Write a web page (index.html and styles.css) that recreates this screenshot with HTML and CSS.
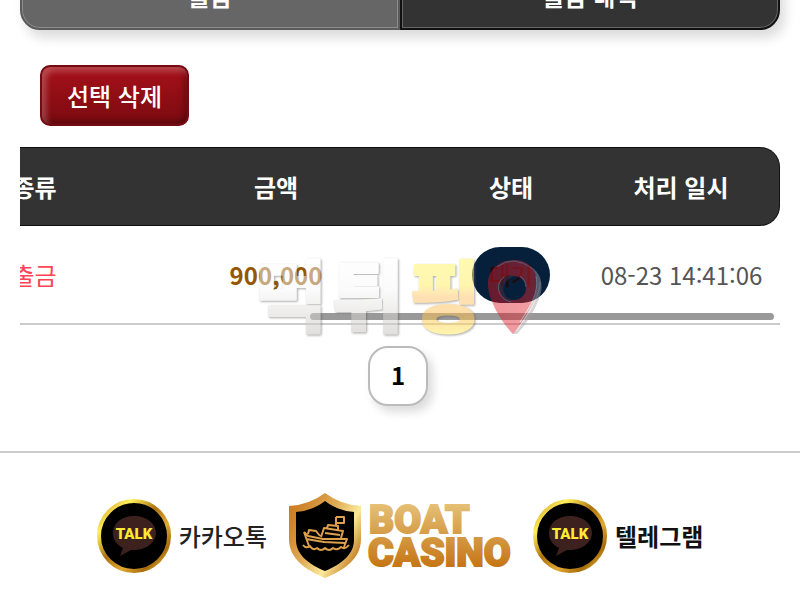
FILE: index.html
```html
<!DOCTYPE html>
<html lang="ko">
<head>
    <meta charset="UTF-8">
    <meta name="viewport" content="width=device-width, initial-scale=1.0">
    <title>출금 내역</title>
    <link rel="stylesheet" href="styles.css">
</head>
<body>
    <main class="container">
        <div class="tabs">
            <button type="button" class="tab">출금</button>
            <button type="button" class="tab active">출금 내역</button>
        </div>

        <button type="button" class="delete-btn">선택 삭제</button>

        <div class="history">
            <div class="table-scroll">
                <table>
                    <colgroup>
                        <col class="col-type">
                        <col class="col-amount">
                        <col class="col-status">
                        <col class="col-date">
                    </colgroup>
                    <thead>
                        <tr>
                            <th>종류</th>
                            <th>금액</th>
                            <th>상태</th>
                            <th>처리 일시</th>
                        </tr>
                    </thead>
                    <tbody>
                        <tr>
                            <td class="type">출금</td>
                            <td class="amount">900,000</td>
                            <td><span class="badge">대기</span></td>
                            <td>08-23 14:41:06</td>
                        </tr>
                    </tbody>
                </table>
            </div>
            <div class="scroll-thumb"></div>

            <svg class="watermark" width="300" height="90" viewBox="0 0 300 90">
                <defs>
                    <linearGradient id="silver" gradientUnits="userSpaceOnUse" x1="0" y1="10" x2="0" y2="86">
                        <stop offset="0" stop-color="#ffffff"/>
                        <stop offset=".4" stop-color="#f8f8f8"/>
                        <stop offset="1" stop-color="#c4c0bd"/>
                    </linearGradient>
                    <linearGradient id="yellow" gradientUnits="userSpaceOnUse" x1="0" y1="10" x2="0" y2="86">
                        <stop offset="0" stop-color="#fff765"/>
                        <stop offset=".35" stop-color="#ffee60"/>
                        <stop offset=".5" stop-color="#ffc36a"/>
                        <stop offset=".75" stop-color="#ffc050"/>
                        <stop offset="1" stop-color="#ffee5c"/>
                    </linearGradient>
                    <linearGradient id="red" x1="0" y1="0" x2="1" y2="0">
                        <stop offset="0" stop-color="#dc1420"/>
                        <stop offset="1" stop-color="#e02c38"/>
                    </linearGradient>
                </defs>
                <g class="mark-text">
                    <text x="2 79" y="77" fill="url(#silver)" stroke="url(#silver)">먹튀</text>
                    <text class="mark-accent" x="156" y="77" fill="url(#yellow)" stroke="url(#yellow)">핑</text>
                </g>
                <g class="pin">
                    <path d="M274 16C286 21 290 31 288 43C284 59 272 77 264 85H259C271 70 280 54 282 38Z" fill="#a9a0a3"/>
                    <path fill-rule="evenodd" d="M261 11C277 11 285 23 284 38C281 55 267 78 260 85C250 75 236 53 235 37C234 22 245 11 261 11ZM261 27A12 12 0 1 0 261 51A12 12 0 1 0 261 27Z" fill="url(#red)"/>
                    <path d="M257 53C244 49 243 31 256 26L262 27C248 31 247 45 257 51Z" fill="#56313f"/>
                    <path d="M258 53C245 50 241 35 251 28M244 18Q260 5 280 20M267 27Q273 31 273 38" fill="none" stroke="#c5a5b0" stroke-width="1"/>
                    <path d="M287 33C287 48 273 69 263 82M283 27C287 45 274 62 267 73" fill="none" stroke="#e8e0e2" stroke-width="1"/>
                </g>
            </svg>
        </div>

        <nav class="pagination">
            <button type="button" class="page">1</button>
        </nav>
    </main>

    <footer class="footer">
        <a href="#" class="contact">
            <svg width="74" height="74" viewBox="0 0 74 74">
                <defs>
                    <linearGradient id="ring" x1="0" y1="0" x2="1" y2="1">
                        <stop offset="0" stop-color="#c68a18"/>
                        <stop offset=".22" stop-color="#fff05b"/>
                        <stop offset=".45" stop-color="#ad7210"/>
                        <stop offset=".65" stop-color="#e1a931"/>
                        <stop offset=".82" stop-color="#a86c0b"/>
                        <stop offset="1" stop-color="#ffe34c"/>
                    </linearGradient>
                </defs>
                <circle cx="37" cy="37" r="35" fill="#000" stroke="url(#ring)" stroke-width="4"/>
                <path d="M37 17C25 17 16 24 16 34C16 41 20 46 26 49L23 57L34 51C48 52 59 44 59 34C59 24 49 17 37 17Z" fill="#3d211f"/>
                <text x="37" y="40" class="talk">TALK</text>
            </svg>
            <span>카카오톡</span>
        </a>

        <svg class="logo" width="224" height="86" viewBox="0 0 224 86">
            <defs>
                <linearGradient id="shield" x1="0" y1="0" x2="1" y2=".7">
                    <stop offset="0" stop-color="#c8791c"/>
                    <stop offset=".2" stop-color="#cf852e"/>
                    <stop offset=".5" stop-color="#e0ac55"/>
                    <stop offset=".75" stop-color="#fbea9c"/>
                    <stop offset="1" stop-color="#c47b20"/>
                </linearGradient>
                <linearGradient id="gold" gradientUnits="userSpaceOnUse" x1="0" y1="12" x2="0" y2="74">
                    <stop offset="0" stop-color="#e4bf74"/>
                    <stop offset="1" stop-color="#c57514"/>
                </linearGradient>
            </defs>
            <path d="M37 0Q53 12 73 13V46C73 66 56 77 37 85C18 77 1 66 1 46V13Q21 12 37 0Z" fill="url(#shield)"/>
            <path d="M37 8Q50 18 66 19V47C66 61 54 71 37 78C20 71 8 61 8 47V19Q24 18 37 8Z" fill="#000"/>
            <!-- boat -->
            <g fill="none" stroke="#dda04b" stroke-width="2" stroke-linejoin="round">
                <path d="M16 39L20 43L35 46H59L56 54M16 39L21 53M18 46L36 49L57 50M20 41L21 37L28 38L32 43M33 44L36 35L55 38L53 45M37 40L52 42M39 35L40 32L50 33V37M48 33V24"/>
                <path d="M48 24H56V30H48"/>
                <path d="M15 52Q18 56 22 53Q25 58 29 55Q33 59 37 55Q41 59 45 55Q49 58 53 54Q57 57 61 52"/>
            </g>
            <g class="logo-text" fill="url(#gold)" stroke="url(#gold)">
                <text x="81" y="40">BOAT</text>
                <text x="80" y="73">CASINO</text>
            </g>
        </svg>

        <a href="#" class="contact telegram">
            <svg width="74" height="74" viewBox="0 0 74 74">
                <circle cx="37" cy="37" r="35" fill="#000" stroke="url(#ring)" stroke-width="4"/>
                <path d="M37 17C25 17 16 24 16 34C16 41 20 46 26 49L23 57L34 51C48 52 59 44 59 34C59 24 49 17 37 17Z" fill="#3d211f"/>
                <text x="37" y="40" class="talk">TALK</text>
            </svg>
            <span>텔레그램</span>
        </a>
    </footer>
</body>
</html>
```

FILE: styles.css
```css
* {
    box-sizing: border-box;
}
body {
    margin: 0;
    background-color: #fff;
    color: #555;
    font-family: "Noto Sans CJK KR", sans-serif;
    font-size: 24px;
    line-height: 36px;
    overflow: hidden;
}
button {
    padding: 0;
    font-family: inherit;
    font-size: 24px;
    line-height: 36px;
    cursor: pointer;
}
.container {
    padding: 0 20px;
}

/* the tab bar is scrolled partly out of view */
.tabs {
    display: flex;
    height: 68px;
    margin-top: -38px;
    border-radius: 20px;
    box-shadow: 5px 8px 12px rgba(0, 0, 0, 0.14);
}
.tab {
    flex: 1;
    border: 2px solid #5b5b5b;
    border-radius: 0 0 0 20px;
    background-color: #666;
    box-shadow: inset 0 0 0 1px #8c8c8c;
    color: #fff;
    font-weight: 700;
}
.tab.active {
    border-color: #111;
    border-radius: 0 0 20px 0;
    background-color: #333;
    box-shadow: inset 0 0 0 1px #666;
}
.delete-btn {
    display: block;
    width: 149px;
    height: 61px;
    margin: 35px 0 21px 20px;
    border: 2px solid #750b11;
    border-radius: 10px;
    background: linear-gradient(#a6111a, #7c0a10);
    box-shadow: inset 4px 4px 6px rgba(255, 255, 255, 0.25), inset -3px -3px 6px rgba(0, 0, 0, 0.3);
    color: #fff;
    font-weight: 500;
}

.history {
    position: relative;
}
.table-scroll {
    display: flex;
    justify-content: flex-end;
    overflow: hidden;
}
table {
    flex-shrink: 0;
    min-width: 824px;
    border-collapse: separate;
    border-spacing: 0;
    table-layout: fixed;
}
.col-amount {
    width: 326px;
}
.col-status {
    width: 144px;
}
.col-date {
    width: 197px;
}
th {
    height: 79px;
    padding: 0;
    border-top: 1px solid #111;
    border-bottom: 1px solid #111;
    background-color: #333;
    color: #fff;
    font-weight: 700;
}
th:last-child {
    border-right: 1px solid #111;
    border-radius: 0 20px 20px 0;
}
td {
    height: 99px;
    padding: 0;
    border-bottom: 2px solid #ccc;
    text-align: center;
}
.type {
    color: #ff4455;
}
.amount {
    color: #945700;
    font-weight: 700;
}
.badge {
    display: inline-block;
    padding: 10px 17px;
    border-radius: 28px;
    background-color: #06203b;
    color: #200a10;
    font-weight: 500;
    vertical-align: middle;
}
.scroll-thumb {
    position: absolute;
    right: 6px;
    bottom: 5px;
    width: 61%;
    height: 7px;
    border-radius: 4px;
    background-color: #999;
}
.watermark {
    position: absolute;
    left: 50%;
    bottom: -14px;
    margin-left: -147px;
    pointer-events: none;
}
.mark-text {
    font-size: 78px;
    font-weight: 900;
    stroke-width: 2px;
    stroke-linejoin: round;
    opacity: 0.5;
    filter: drop-shadow(1px 1px 1px #555);
}
.pin {
    opacity: 0.45;
}

.pagination {
    display: flex;
    justify-content: center;
    padding: 21px 4px 45px 0;
}
.page {
    width: 60px;
    height: 60px;
    padding-bottom: 2px;
    border: 2px solid #bbb;
    border-radius: 20px;
    background-color: #fff;
    box-shadow: 5px 6px 10px rgba(0, 0, 0, 0.14);
    color: #000;
    font-weight: 700;
}

.footer {
    display: flex;
    justify-content: center;
    align-items: center;
    gap: 21px;
    padding: 40px 0 20px;
    border-top: 2px solid #ccc;
}
.contact {
    display: flex;
    align-items: center;
    gap: 8px;
    color: #222;
    font-weight: 500;
    text-decoration: none;
}
.telegram {
    color: #111;
    font-weight: 700;
}
.talk {
    fill: #ffe936;
    font-family: Roboto, sans-serif;
    font-size: 15px;
    font-weight: 900;
    text-anchor: middle;
}
.logo-text {
    font-family: Roboto, sans-serif;
    font-size: 39px;
    font-weight: 900;
    stroke-width: 2px;
}
```
